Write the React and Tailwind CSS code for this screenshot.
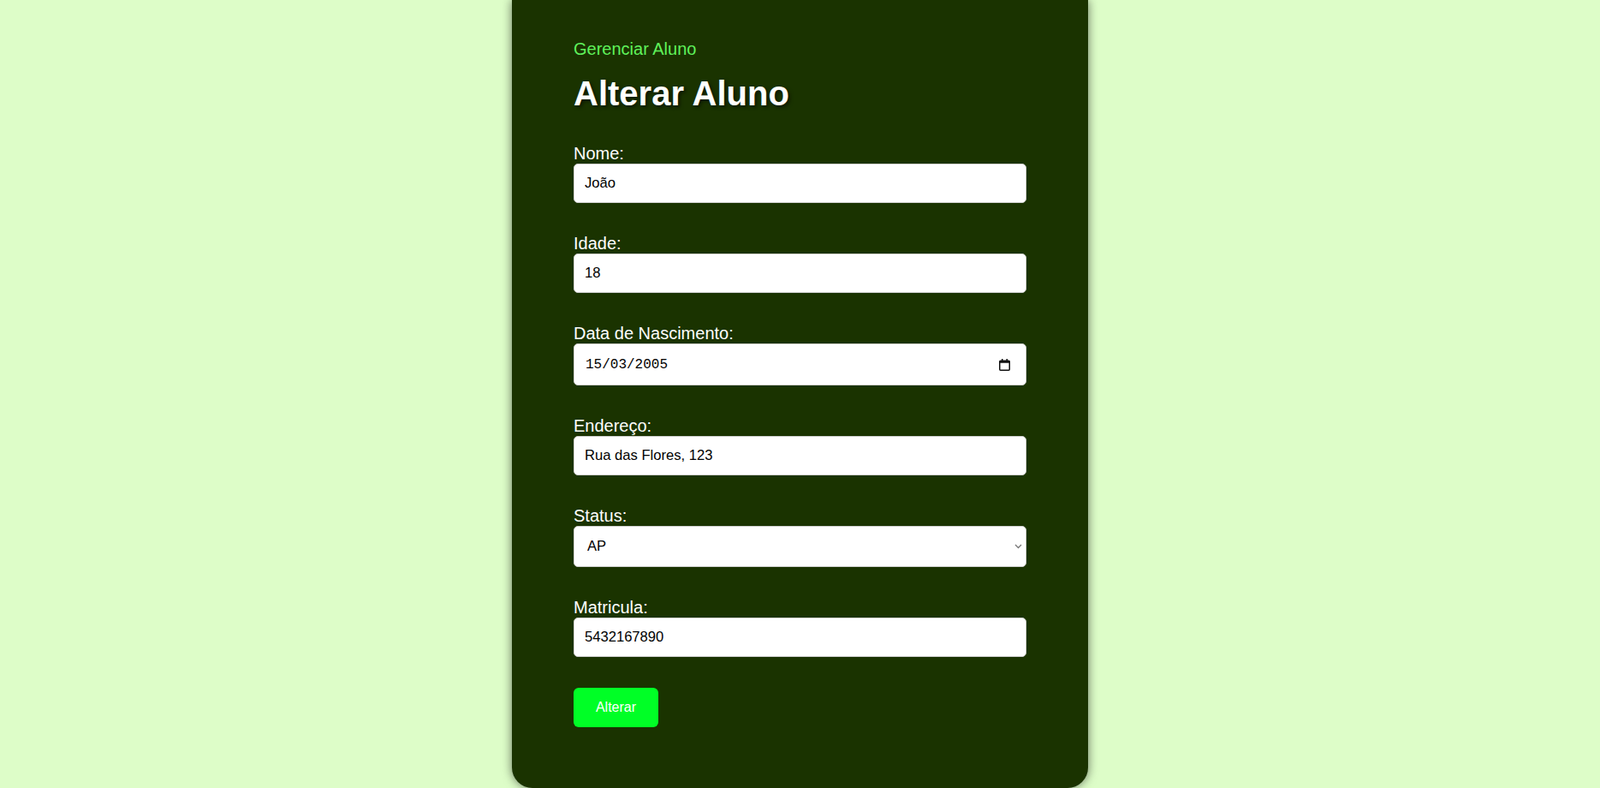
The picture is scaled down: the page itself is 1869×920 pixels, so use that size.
import { useState } from 'react';

const fields = [
  { id: 'nome', label: 'Nome:', value: 'João' },
  { id: 'idade', label: 'Idade:', value: '18' },
];

const fieldsAfter = [{ id: 'endereco', label: 'Endereço:', value: 'Rua das Flores, 123' }];

const inputClass =
  'block w-full h-[46px] px-[12px] bg-white text-black text-[16.6px] border border-[#cfcfcf] rounded-[5px] outline-none font-["Liberation_Sans",Arial,sans-serif]';

function Label({ htmlFor, children }) {
  return (
    <label htmlFor={htmlFor} className="block text-[20px] leading-[23px] text-white">
      {children}
    </label>
  );
}

function CalendarIcon() {
  return (
    <svg width="13" height="14" viewBox="0 0 13 14" fill="none">
      <rect x="3" y="0" width="1.5" height="3" fill="#111" />
      <rect x="8.5" y="0" width="1.5" height="3" fill="#111" />
      <rect x="0.75" y="2.25" width="11.5" height="11" rx="1" stroke="#111" strokeWidth="1.5" />
      <rect x="0.75" y="2.25" width="11.5" height="2.5" fill="#111" />
    </svg>
  );
}

export default function App() {
  const [form, setForm] = useState({
    nome: 'João',
    idade: '18',
    endereco: 'Rua das Flores, 123',
    status: 'AP',
    matricula: '5432167890',
  });

  const set = (k) => (e) => setForm({ ...form, [k]: e.target.value });

  return (
    <div className="min-h-screen bg-[#ddfdc8] flex justify-center font-['Liberation_Sans',Arial,sans-serif]">
      <div className="w-[673px] bg-[#1a3300] rounded-b-[24px] px-[72px] pt-[46px] pb-[71px] shadow-[0_0_12px_rgba(0,0,0,0.55)]">
        <p className="text-[20px] leading-[23px] text-[#5ff25a]">Gerenciar Aluno</p>
        <h1 className="mt-[17px] text-[40px] leading-[46px] font-bold text-white [text-shadow:2px_2px_4px_rgba(0,0,0,0.6)]">
          Alterar Aluno
        </h1>

        <form className="mt-[36px] flex flex-col gap-[36px]" onSubmit={(e) => e.preventDefault()}>
          {fields.map((f) => (
            <div key={f.id}>
              <Label htmlFor={f.id}>{f.label}</Label>
              <input id={f.id} className={inputClass} value={form[f.id]} onChange={set(f.id)} />
            </div>
          ))}

          {/* Data de nascimento */}
          <div>
            <Label htmlFor="nasc">Data de Nascimento:</Label>
            <div className="flex items-center justify-between w-full h-[49px] pl-[13px] pr-[18px] bg-white border border-[#cfcfcf] rounded-[5px]">
              <span id="nasc" className="text-[16px] text-black font-['Liberation_Mono','DejaVu_Sans_Mono',monospace]">
                15/03/2005
              </span>
              <CalendarIcon />
            </div>
          </div>

          {fieldsAfter.map((f) => (
            <div key={f.id}>
              <Label htmlFor={f.id}>{f.label}</Label>
              <input id={f.id} className={inputClass} value={form[f.id]} onChange={set(f.id)} />
            </div>
          ))}

          {/* Status */}
          <div>
            <Label htmlFor="status">Status:</Label>
            <div className="relative">
              <select
                id="status"
                value={form.status}
                onChange={set('status')}
                className="block w-full h-[48px] pl-[15px] pr-[30px] appearance-none bg-white text-black text-[16.6px] border border-[#cfcfcf] rounded-[5px] outline-none"
              >
                <option value="AP">AP</option>
                <option value="RP">RP</option>
                <option value="EC">EC</option>
              </select>
              <svg className="absolute right-[5px] top-[21px] pointer-events-none" width="9" height="6" viewBox="0 0 9 6" fill="none">
                <path d="M1 1l3.5 3.5L8 1" stroke="#777" strokeWidth="1.3" />
              </svg>
            </div>
          </div>

          <div>
            <Label htmlFor="matricula">Matricula:</Label>
            <input id="matricula" className={inputClass} value={form.matricula} onChange={set('matricula')} />
          </div>

          <div>
            <button
              type="submit"
              className="w-[99px] h-[46px] bg-[#00ff26] text-white text-[16px] rounded-[6px]"
            >
              Alterar
            </button>
          </div>
        </form>
      </div>
    </div>
  );
}
